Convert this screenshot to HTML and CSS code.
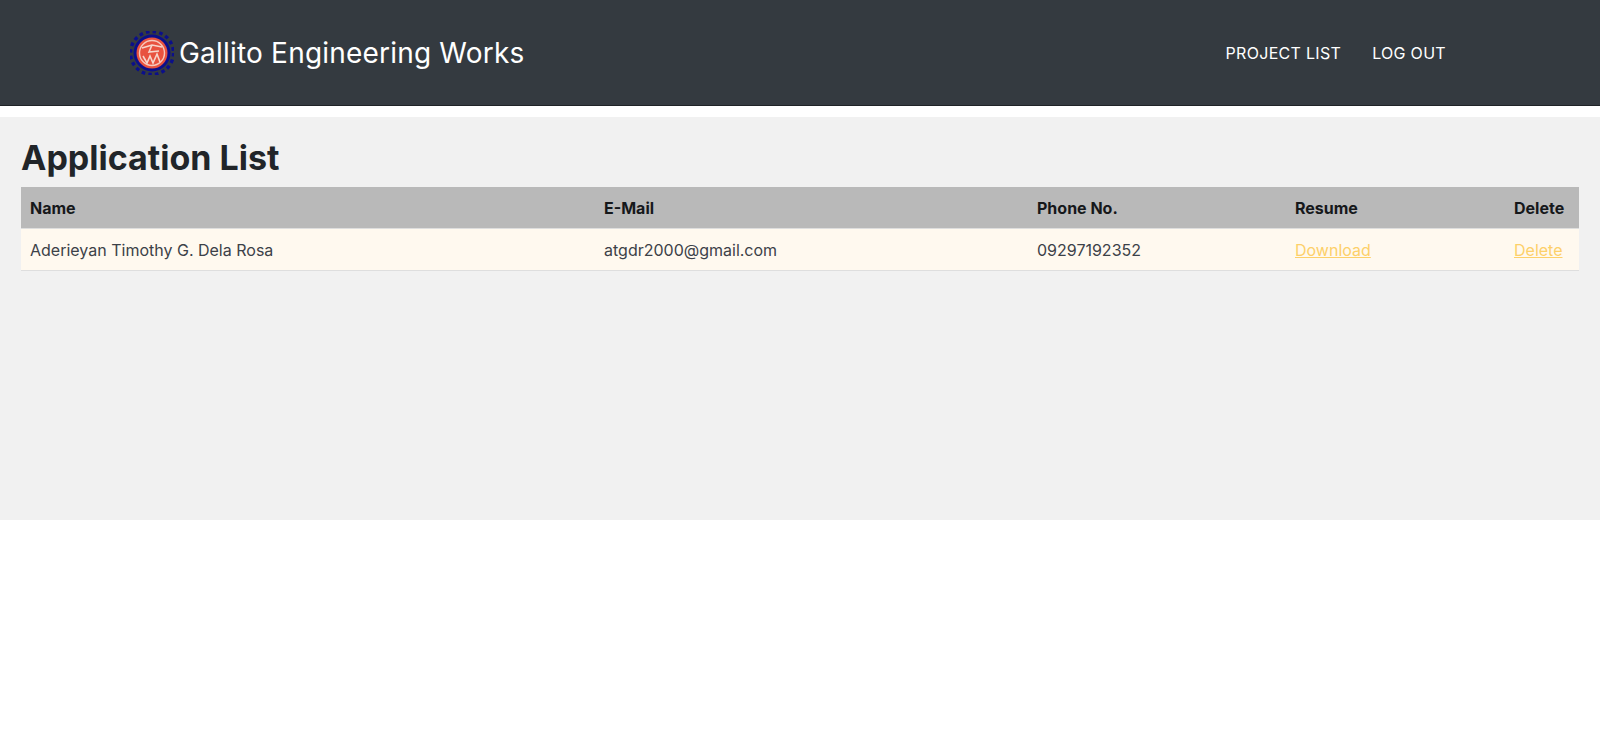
FILE: index.html
```html
<!DOCTYPE html>
<html lang="en">
<head>
    <meta charset="UTF-8">
    <meta name="viewport" content="width=device-width, initial-scale=1.0">
    <title>Application List</title>
    <link rel="stylesheet" href="styles.css">
</head>
<body>
    <nav class="navbar">
        <a class="brand" href="#">
            <svg class="brand-logo" viewBox="0 0 44 44" width="44" height="44" aria-hidden="true">
                <circle cx="22" cy="22" r="21.5" fill="none" stroke="#0b0f8a" stroke-width="3.4" stroke-dasharray="3.6 3.15"/>
                <circle cx="22" cy="22" r="18.5" fill="#0b0f8a"/>
                <circle cx="22" cy="22" r="15.5" fill="#e8523f"/>
                <circle cx="22" cy="22" r="12.5" fill="none" stroke="#f6c9bd" stroke-width="1.4"/>
                <path d="M12 17 L22 14 L32 16 M22 14 L19 21 L29 20 M13 25 L17 32 L20 25 L23 32 L27 23 L30 31" fill="none" stroke="#f6d5cb" stroke-width="1.6"/>
            </svg>
            <span class="brand-name">Gallito Engineering Works</span>
        </a>
        <div class="nav-links">
            <a href="#">PROJECT LIST</a>
            <a href="#">LOG OUT</a>
        </div>
    </nav>

    <main class="content">
        <h1>Application List</h1>
        <table class="app-table">
            <thead>
                <tr>
                    <th class="col-name">Name</th>
                    <th class="col-email">E-Mail</th>
                    <th class="col-phone">Phone No.</th>
                    <th class="col-resume">Resume</th>
                    <th>Delete</th>
                </tr>
            </thead>
            <tbody>
                <tr>
                    <td>Aderieyan Timothy G. Dela Rosa</td>
                    <td>atgdr2000@gmail.com</td>
                    <td>09297192352</td>
                    <td><a href="#">Download</a></td>
                    <td><a href="#">Delete</a></td>
                </tr>
            </tbody>
        </table>
    </main>
</body>
</html>
```

FILE: styles.css
```css
body {
    margin: 0;
    background: white;
    font-family: Inter, "Open Sans", sans-serif;
    color: #212529;
}

.navbar {
    height: 106px;
    box-sizing: border-box;
    background-color: #343a40;
    border-bottom: 1px solid #1f2327;
    display: flex;
    align-items: center;
    justify-content: space-between;
    padding: 0 154px 0 130px;
}

.brand {
    display: flex;
    align-items: center;
    gap: 5px;
    color: white;
    text-decoration: none;
}

.brand-name {
    font-size: 28px;
    letter-spacing: 0.2px;
}

.nav-links {
    display: flex;
    gap: 31px;
}

.nav-links a {
    color: white;
    font-size: 16px;
    letter-spacing: 0.3px;
    text-decoration: none;
}

.content {
    margin-top: 11px;
    height: 403px;
    box-sizing: border-box;
    padding: 20px 21px 0;
    background-color: #f1f1f1;
}

h1 {
    margin: 0 0 8px;
    font-size: 34px;
    line-height: 42px;
    font-weight: 700;
}

.app-table {
    width: 100%;
    border-collapse: collapse;
    table-layout: fixed;
    font-size: 16px;
}

.app-table th,
.app-table td {
    height: 41px;
    padding: 0 9px;
    text-align: left;
    border-bottom: 1px solid #dedede;
}

.app-table th {
    background-color: #b9b9b9;
    color: #16181b;
    font-weight: 700;
}

.app-table td {
    background-color: #fff9ef;
    color: #3c4148;
    font-weight: 400;
}

.app-table a {
    color: #fdd069;
}

.col-name { width: 556px; }
.col-email { width: 415px; }
.col-phone { width: 240px; }
.col-resume { width: 201px; }
```
